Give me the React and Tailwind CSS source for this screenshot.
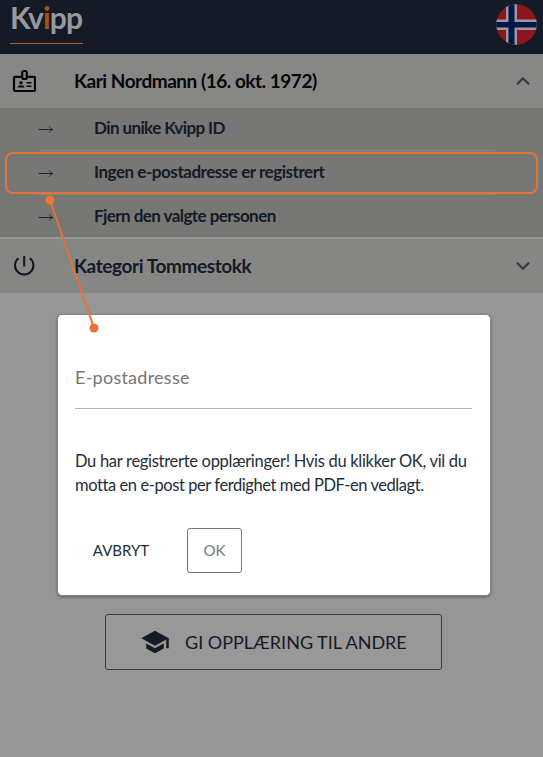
import { MdSchool } from "react-icons/md";

const actions = [
  { label: "Din unike Kvipp ID", tracking: "tracking-[-0.6px]" },
  { label: "Ingen e-postadresse er registrert", tracking: "tracking-[-0.46px]" },
  { label: "Fjern den valgte personen", tracking: "tracking-[-0.56px]" },
];

function Arrow() {
  return (
    <svg className="h-[10px] w-4" viewBox="0 0 16 10" fill="none" stroke="#20242a" strokeWidth="1">
      <path d="M0.5 5.5H15M11 2.3C12 4 13.3 5 15 5.5C13.3 6 12 7 11 8.7" />
    </svg>
  );
}

function NorwayFlag() {
  return (
    <svg className="h-[41px] w-[41px]" viewBox="0 0 41 41">
      <defs>
        <clipPath id="flag">
          <circle cx="20.5" cy="20.5" r="20.3" />
        </clipPath>
      </defs>
      <g clipPath="url(#flag)">
        <path fill="#8d151d" d="M0 0h41v41H0z" />
        <path fill="#9a9a9b" d="M10 0h11v41H10zM0 15.5h41v10.5H0z" />
        <path fill="#001849" d="M12.5 0h6v41h-6zM0 18h41v5.5H0z" />
      </g>
    </svg>
  );
}

function Badge() {
  return (
    <svg className="h-6 w-6" viewBox="0 0 24 24" fill="none">
      <path d="M9.5 7.8H3Q2 7.8 2 8.8V21Q2 22 3 22H22Q23 22 23 21V8.8Q23 7.8 22 7.8H15.5" stroke="#050709" strokeWidth="2.2" />
      <rect x="10.2" y="2" width="4.6" height="8" rx="1.6" stroke="#050709" strokeWidth="2.2" />
      <circle cx="9" cy="13.8" r="1.7" fill="#050709" />
      <path d="M5.5 18.6Q5.5 16.2 9 16.2T12.5 18.6Z" fill="#050709" />
      <path d="M14.5 13.8H19.5M14.5 17.2H19.5" stroke="#050709" strokeWidth="1.5" />
    </svg>
  );
}

function Power() {
  return (
    <svg className="h-6 w-6" viewBox="0 0 24 24" fill="none" stroke="#10161f" strokeWidth="2">
      <path d="M12.2 2V12.5M6.4 4.2A9.2 9.2 0 1 0 18 4.2" />
    </svg>
  );
}

function Chevron({ up }) {
  return (
    <svg className="h-2 w-[14px]" viewBox="0 0 14 8" fill="none" stroke="#383a3d" strokeWidth="2.2">
      <path d={up ? "M1 7.2L7 1.4L13 7.2" : "M1 0.8L7 6.6L13 0.8"} />
    </svg>
  );
}

function Dialog() {
  return (
    <section className="absolute top-[314px] left-[57px] flex h-[282px] w-[434px] flex-col rounded-[5px] border border-[#858585] bg-white px-[17px] shadow-[0_1px_3px_rgba(0,0,0,0.4)]">
      <div className="mt-[47px] mr-px flex h-[47px] items-start border-b border-[#b4b4b4] text-[18px] leading-[30px] tracking-[0.25px] text-[#757575]">
        E-postadresse
      </div>
      <p className="mt-[40px] text-[16.5px] leading-[24px] whitespace-nowrap text-[#252d3a]">
        <span className="tracking-[-0.3px]">Du har registrerte opplæringer! Hvis du klikker OK, vil du</span>
        <br />
        <span className="tracking-[-0.42px]">motta en e-post per ferdighet med PDF-en vedlagt.</span>
      </p>
      <div className="mt-[31px] flex items-center">
        <button className="w-[92px] pb-px text-center text-[15px] text-[#252d3a]">AVBRYT</button>
        <button className="ml-5 h-[45px] w-[55px] rounded-[3px] border border-[#737780] text-[15px] text-[#757985]">OK</button>
      </div>
    </section>
  );
}

function Callout() {
  return (
    <svg className="absolute inset-0 h-[757px] w-[543px]" viewBox="0 0 543 757" fill="none">
      <rect x="6" y="153" width="531" height="40" rx="7" stroke="#e37337" strokeWidth="2" />
      <path d="M50 200L94 328" stroke="#e37337" strokeWidth="2" />
      <circle cx="50" cy="200" r="4.5" fill="#ec7330" />
      <circle cx="94" cy="328" r="4.5" fill="#e37337" />
    </svg>
  );
}

export default function App() {
  return (
    <main className="relative flex h-[757px] w-[543px] flex-col overflow-hidden bg-[#969696] font-['Lato',sans-serif]">
      <header className="flex h-[54px] shrink-0 items-start justify-between bg-[#141a26] pr-[6px] pl-[10px]">
        <div className="w-[73px]">
          <div className="h-[43px] text-[30px] leading-[34px] font-bold tracking-[-0.9px] whitespace-nowrap text-[#98999c]">
            Kv<span className="text-[#a65510]">i</span>pp
          </div>
          <div className="h-px bg-[#b06026]" />
        </div>
        <div className="mt-1">
          <NorwayFlag />
        </div>
      </header>
      <div className="flex h-[54px] shrink-0 items-center bg-[#878786] pr-[13px] pl-3">
        <Badge />
        <h2 className="ml-[38px] flex-1 text-[19px] font-bold tracking-[-0.48px] text-[#050709]">Kari Nordmann (16. okt. 1972)</h2>
        <Chevron up />
      </div>
      <ul className="flex h-[129px] shrink-0 flex-col bg-[#777775] pr-[48px] pl-[38px]">
        {actions.map(({ label, tracking }) => (
          <li key={label} className="flex h-[43px] shrink-0 items-center border-b border-[#858584] last:border-0 nth-2:h-[44px]">
            <Arrow />
            <span className={"ml-10 -mt-[2px] text-[17px] font-bold text-[#141a26] " + tracking}>{label}</span>
          </li>
        ))}
      </ul>
      <div className="flex h-[56px] shrink-0 items-center border-t-2 border-[#969695] bg-[#868684] pr-[13px] pl-3">
        <Power />
        <h2 className="ml-[38px] flex-1 text-[19px] font-bold tracking-[-0.4px] text-[#141a26]">Kategori Tommestokk</h2>
        <Chevron />
      </div>
      <button className="mt-[321px] ml-[105px] flex h-[56px] w-[337px] shrink-0 items-center rounded-[3px] border border-[#383b40] bg-[#989898] pl-[34px] text-[#141a26]">
        <MdSchool className="h-[30px] w-[30px]" />
        <span className="ml-[15px] text-[18px] whitespace-nowrap">GI OPPLÆRING TIL ANDRE</span>
      </button>
      <Dialog />
      <Callout />
    </main>
  );
}
